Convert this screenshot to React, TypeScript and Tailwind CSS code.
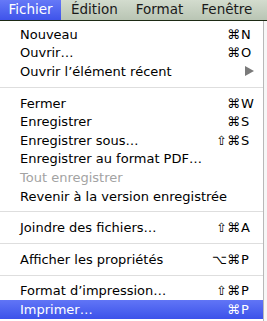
import React from "react";

type Item = {
  label?: string;
  mods?: string;
  keyChar?: string;
  disabled?: boolean;
  submenu?: boolean;
  active?: boolean;
  sep?: boolean;
};

const items: Item[] = [
  { label: "Nouveau", mods: "⌘", keyChar: "N" },
  { label: "Ouvrir…", mods: "⌘", keyChar: "O" },
  { label: "Ouvrir l’élément récent", submenu: true },
  { sep: true },
  { label: "Fermer", mods: "⌘", keyChar: "W" },
  { label: "Enregistrer", mods: "⌘", keyChar: "S" },
  { label: "Enregistrer sous…", mods: "⇧⌘", keyChar: "S" },
  { label: "Enregistrer au format PDF…" },
  { label: "Tout enregistrer", disabled: true },
  { label: "Revenir à la version enregistrée" },
  { sep: true },
  { label: "Joindre des fichiers…", mods: "⇧⌘", keyChar: "A" },
  { sep: true },
  { label: "Afficher les propriétés", mods: "⌥⌘", keyChar: "P" },
  { sep: true },
  { label: "Format d’impression…", mods: "⇧⌘", keyChar: "P" },
  { label: "Imprimer…", mods: "⌘", keyChar: "P", active: true },
];

const MenuRow = ({ item }: { item: Item }) => {
  if (item.sep) {
    return (
      <div className="h-[13px] flex items-center">
        <div className="h-px w-full bg-[#dedede]" />
      </div>
    );
  }
  const color = item.active
    ? "text-white"
    : item.disabled
    ? "text-[#a3a3a3]"
    : "text-black";
  return (
    <div
      className={`h-[18.6px] flex items-center pl-5 pr-[10px] ${color} ${
        item.active ? "bg-gradient-to-b from-[#6175f6] to-[#3d51ea]" : ""
      }`}
    >
      <span className="flex-1 whitespace-nowrap">{item.label}</span>
      {item.submenu && (
        <svg width="9" height="10" viewBox="0 0 9 10" className="-mr-[1px]">
          <path d="M0 0 L9 5 L0 10 Z" fill="#7a7a7a" />
        </svg>
      )}
      {item.keyChar && (
        <span className="flex items-center">
          <span className="text-right whitespace-nowrap">{item.mods}</span>
          <span className="w-[13px] pl-[1px]">{item.keyChar}</span>
        </span>
      )}
    </div>
  );
};

export default function App() {
  return (
    <div
      className="w-[267px] h-[321px] overflow-hidden bg-[#f7f7f7] text-[13px] leading-none"
      style={{ fontFamily: '"DejaVu Sans", "Liberation Sans", sans-serif' }}
    >
      <div className="h-[21px] flex items-stretch bg-gradient-to-b from-[#d3dcce] to-[#b9c5b4] border-b border-[#1d2a14] text-[#1a1a1a] text-[13.5px]">
        <div className="w-[61px] flex items-center justify-center bg-gradient-to-b from-[#6679f7] to-[#3f53ea] text-white">
          Fichier
        </div>
        <div className="flex items-center pl-[10px]">Édition</div>
        <div className="flex items-center pl-[18px]">Format</div>
        <div className="flex items-center pl-[18px]">Fenêtre</div>
      </div>
      <div className="w-[264px] bg-white/95 border-r border-[#b8b8b8] pt-[4px] h-[300px]">
        {items.map((it, i) => (
          <MenuRow key={i} item={it} />
        ))}
      </div>
    </div>
  );
}
